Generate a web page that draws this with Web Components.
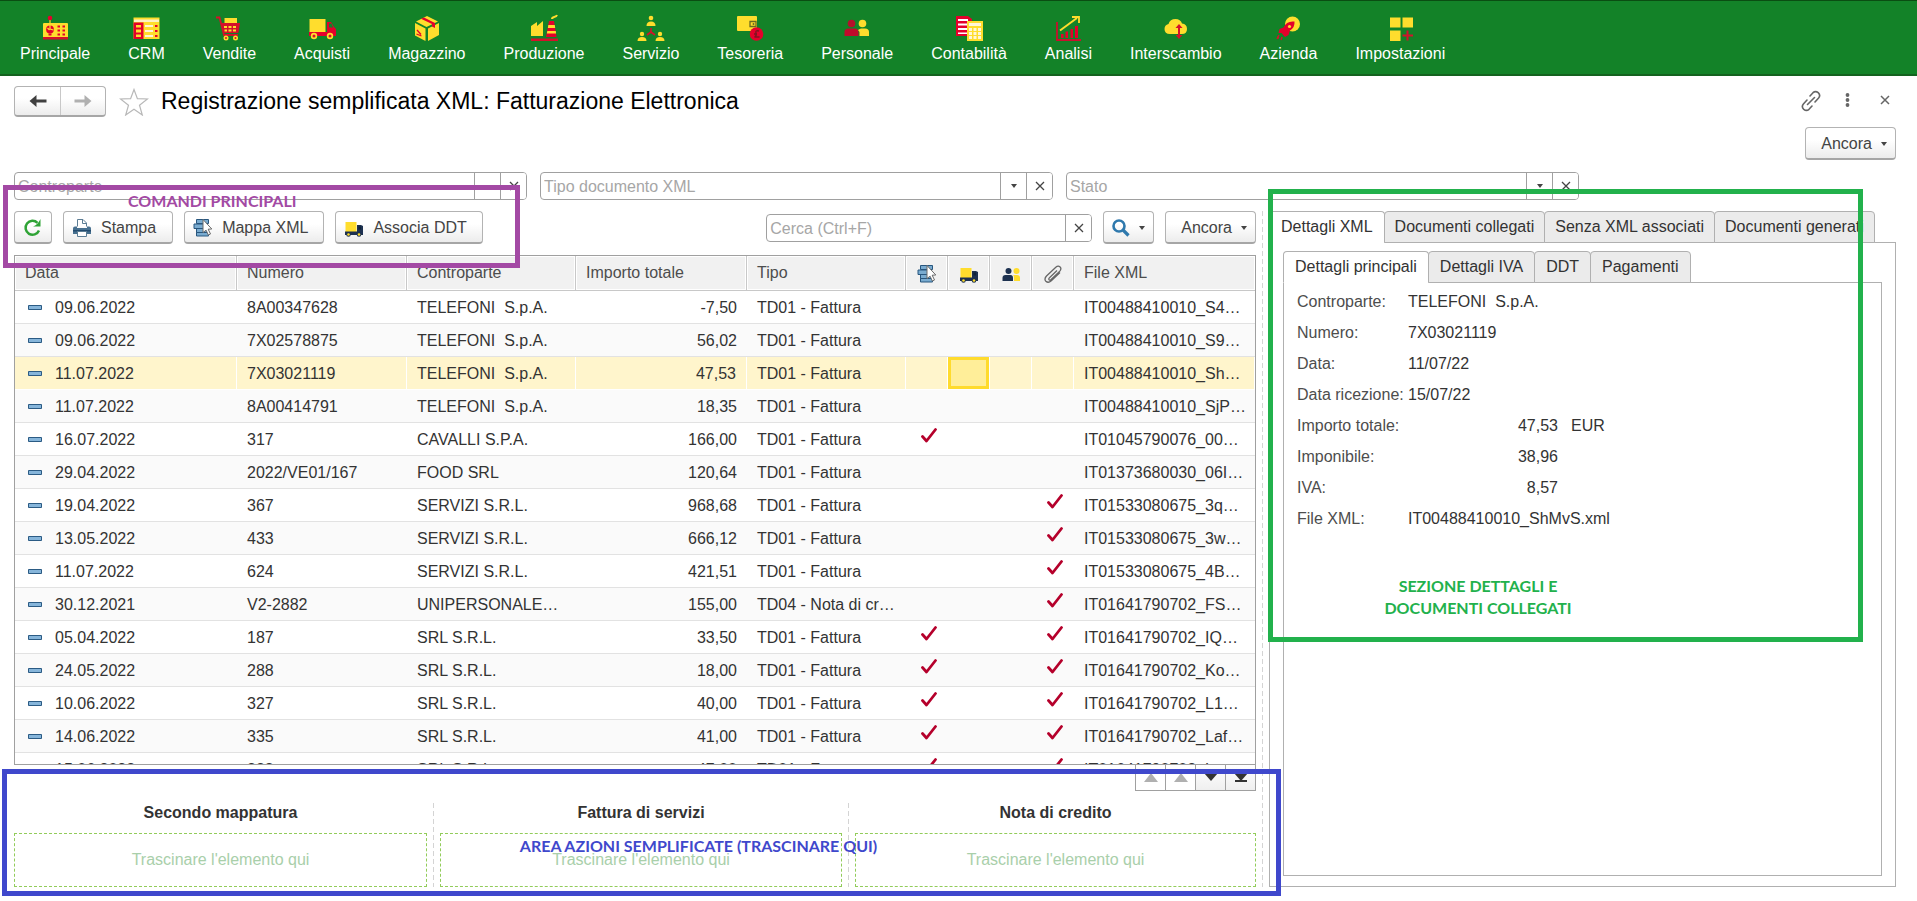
<!DOCTYPE html>
<html lang="it">
<head>
<meta charset="utf-8">
<title>Registrazione semplificata XML: Fatturazione Elettronica</title>
<style>
html,body{margin:0;height:100%}
body{font:16px/24px "Liberation Sans",Arial,sans-serif;color:#333;background:#fff;overflow:hidden}
</style>
</head>
<body>
<erp-app></erp-app>
<script>
const ICONS={
principale:[28,28,`<path d="M9 5v5" stroke="#f3c623" stroke-width="1.4"/><circle cx="9" cy="5" r="2.3" fill="#e4002b"/><path d="M2 11q0-1 1-1h23q1 0 1 1v13H2z" fill="#ffdd2d"/><path d="M2 24h25v2.5H2z" fill="#d5102b"/><circle cx="9" cy="16.500" r="3.900" fill="#e4002b"/><path d="M9 11v5l3.500 1M6.500 15l2 2" stroke="#ffdd2d" stroke-width="1.200" fill="none"/><path d="M7.500 20.500h3v2h-3zM16.500 12.500h2.500v2h-2.500zM21.500 12.500H24v2h-2.500zM16.500 16.500h2.500v2h-2.500zM21.500 16.500H24v2h-2.500zM16.500 20.500h2.500v2h-2.500zM21.500 20.500H24v2h-2.500z" fill="#e4002b"/>`],
crm:[28,28,`<path d="M1.500 4.500h26V26h-26z" fill="#ffdd2d"/><path d="M2 6.500h25v2.500H2z" fill="#fff3c4"/><path d="M1.500 9.500h10V26h-10z" fill="#e4002b"/><path d="M4 12h5v2.500H4zM4 16.500h5v3H4zM4 21.500h5V24H4z" fill="#ffdd2d"/><path d="M13 12h8v2h-8zM13 17h8v2h-8zM13 22h8v2h-8z" fill="#fff6d8"/><path d="M23 12h2.500v2H23zM23 17h2.500v2H23zM23 22h2.500v2H23z" fill="#e4002b"/>`],
vendite:[28,28,`<path d="M9.500 5h12.500v7H9.500z" fill="#ffdd2d"/><path d="M1 4.500h3.500l4.500 17.500h14M5.500 11H24l-1.500 8H8" fill="none" stroke="#d5102b" stroke-width="1.800"/><path d="M7 12h16.500v7H8z" fill="#d5102b"/><path d="M9 13h3v2H9zM13.500 13h3v2h-3zM18 13h3v2h-3zM9.500 16.500h2.500v2H9.500zM13.500 16.500h3v2h-3zM18 16.500h3v2h-3z" fill="#ffdd2d"/><circle cx="11" cy="25" r="2.500" fill="#ffdd2d"/><circle cx="20.500" cy="25" r="2.500" fill="#ffdd2d"/><circle cx="11" cy="25" r="1" fill="#d5102b"/><circle cx="20.500" cy="25" r="1" fill="#d5102b"/>`],
acquisti:[28,28,`<path d="M1.500 6h16v13h-16z" fill="#ffdd2d"/><path d="M19 9h4l3 5 2 2v7H1v-4h18z" fill="#e4002b"/><path d="M21 10.500h2.500l1.500 4h-4z" fill="#138228"/><circle cx="6" cy="23" r="3.200" fill="#ffdd2d"/><circle cx="22" cy="23" r="3.200" fill="#ffdd2d"/><circle cx="6" cy="23" r="1.500" fill="#d5102b"/><circle cx="22" cy="23" r="1.500" fill="#d5102b"/>`],
magazzino:[28,28,`<path d="M14 3l11 5.500L13.500 14 3 8.500z" fill="#ffdd2d"/><path d="M2 10l10.500 5.500V28L2 22.500z" fill="#ffdd2d"/><path d="M15 15.500L26 10v12l-11 6z" fill="#ffdd2d"/><path d="M11 4.500l11 5.500v5l-3-1.500v-2.500L8 5.800z" fill="#e4002b"/><path d="M4 17l4 4.500M3.500 21l5 2" stroke="#e4002b" stroke-width="1.300"/>`],
produzione:[28,28,`<path d="M1 23V13l6-4v4l6-5v15z" fill="#ffdd2d"/><path d="M19 8h5l2.500 16H16z" fill="#e4002b"/><path d="M18.300 12h6.500l.4 3h-7.300zM17.300 18h8.500l.3 2.500h-9.200z" fill="#ffdd2d"/><path d="M1 25.500h27V28H1z" fill="#d5102b"/><path d="M22 6c0-3 4-1 5-4" stroke="#ffdd2d" stroke-width="2" fill="none"/>`],
servizio:[28,28,`<g fill="#ffdd2d"><circle cx="14" cy="5" r="2.300"/><path d="M9.500 13q0-4.500 4.500-4.500t4.500 4.500z"/><circle cx="5" cy="21" r="2.200"/><path d="M.5 28q0-4 4.500-4t4.500 4z"/><circle cx="23" cy="21" r="2.200"/><path d="M18.500 28q0-4 4.500-4t4.500 4z"/></g><path d="M14 15v4l-4 3M14 19l4 3" stroke="#d5102b" stroke-width="1.600" fill="none"/>`],
tesoreria:[28,28,`<rect x="1" y="3" width="20" height="15" rx="1" fill="#ffdd2d"/><path d="M14 8.500h6v5h-6z" fill="none" stroke="#6b6a20" stroke-width="1.300"/><circle cx="17.500" cy="11" r="1" fill="#6b6a20"/><circle cx="20.500" cy="21" r="6.800" fill="#e4002b"/><path d="M23 18q-4-1-3 2t-1.500 4h5M18 21h3" stroke="#7f1420" stroke-width="1.300" fill="none"/>`],
personale:[28,28,`<circle cx="8.500" cy="10.500" r="3.800" fill="#b5102b"/><path d="M1.500 23v-4q0-3.500 4-3.500h6q4 0 4 3.500v4z" fill="#c00a2b"/><circle cx="19.500" cy="10.500" r="3.800" fill="#ffdd2d"/><path d="M15 17q2-1.500 3-1.500h4q4 0 4 3.500v4H16.500v-4z" fill="#ffdd2d"/>`],
contabilita:[28,28,`<path d="M1 3h12l4 3v17H1z" fill="#e4002b"/><path d="M3 6h10v2H3zM3 10.500h10v2H3zM3 15h10v2H3zM3 19.500h10v1.500H3z" fill="#fff"/><path d="M12 8h16v20H12z" fill="#ffdd2d"/><path d="M14 10h12v3H14zM14 15h3v3h-3zM18.500 15h3v3h-3zM23 15h3v3h-3zM14 19h3v3h-3zM18.500 19h3v3h-3zM23 19h3v3h-3zM14 23h3v3h-3zM18.500 23h3v3h-3zM23 23h3v3h-3z" fill="#fff6d8"/>`],
analisi:[28,28,`<path d="M3 9v18h24" stroke="#c8102e" stroke-width="1.800" fill="none"/><path d="M7 21h2.500v4H7zM11.500 18.500H14V25h-2.500zM16.500 16H19v9h-2.500zM21 13h3v12h-3z" fill="#e4002b"/><path d="M6 17.500L23 5" stroke="#ffdd2d" stroke-width="2"/><path d="M18 4h7v6" stroke="#ffdd2d" stroke-width="1.800" fill="none"/>`],
interscambio:[28,28,`<path d="M8 21q-5.500 0-5.500-5 0-4 4-5Q8 6 13.500 6q5 0 6.500 4.500 5 .5 5 5.500t-5 5z" fill="#ffdd2d"/><path d="M17 13v11" stroke="#d5102b" stroke-width="2"/><path d="M17 11l3.500 4h-7zM17 26l3.500-4h-7z" fill="#d5102b"/>`],
azienda:[28,28,`<circle cx="18.500" cy="11" r="7.500" fill="#ffdd2d"/><path d="M20.500 8.500q-8-1-11 6l-4 1.500-1 4 3 0 3.500 4 3.500-2 1.500-4.500q5-3 4.500-9z" fill="#e4002b"/><circle cx="15.500" cy="13.500" r="1.600" fill="#ffdd2d"/><path d="M5 22l-2 4M8 24l-1 3M5 25l-2-1" stroke="#d5102b" stroke-width="1.400"/>`],
impostazioni:[28,28,`<path d="M4 4.500h10.500v10H4zM16.500 4.500H27v10H16.500zM4 17.500h10.500V28H4z" fill="#ffdd2d"/><path d="M21.500 17.500v10M16.500 22.500h10.500" stroke="#d5102b" stroke-width="2"/>`],
back:[20,16,`<path d="M1.500 8L8.500 2v4.600h10v2.800h-10V14z" fill="#404040"/>`],
fwd:[20,16,`<path d="M18.500 8l-7-6v4.600h-10v2.800h10V14z" fill="#b0b0b0"/>`],
star:[30,28,`<path d="M15 1.500l3.400 9.200 10.100.3-8 6.200 2.800 9.800L15 21.300 6.700 27l2.800-9.800-8-6.200 10.100-.3z" fill="#fff" stroke="#b8b8b8" stroke-width="1.200"/>`],
link:[22,22,`<g fill="none" stroke="#666" stroke-width="1.600" stroke-linecap="round"><path d="M10 6l3-3.300q2.500-2.200 5.200 0 2.700 2.600.4 5.300L15 12"/><path d="M12 16l-3 3.300q-2.500 2.200-5.200 0-2.700-2.600-.4-5.300L7 10"/><path d="M7.500 14.500l7-7"/></g>`],
dots:[22,22,`<g fill="#666"><circle cx="10.500" cy="5" r="1.900"/><circle cx="10.500" cy="10" r="1.900"/><circle cx="10.500" cy="15" r="1.900"/></g>`],
close:[22,22,`<path d="M7 6l8 8M15 6l-8 8" stroke="#666" stroke-width="1.500"/>`],
x:[10,10,`<path d="M1 1l8 8M9 1L1 9" stroke="#444" stroke-width="1.300"/>`],
caret:[6,4,`<path d="M0 0h6L3 4z" fill="#444"/>`],
refresh:[20,20,`<path d="M16 12.500A7 7 0 1 1 14.500 4.800" fill="none" stroke="#2fa336" stroke-width="2.500"/><path d="M17.500 1v7.500H10q4.500-1.500 7.500-7.500z" fill="#2fa336"/>`],
printer:[20,20,`<path d="M5.500 8.500V1.500h5.500l3.500 3.500v3.500" fill="#fff" stroke="#5c7d94"/><path d="M10.500 1.500V5.500h4" fill="none" stroke="#5c7d94"/><path d="M1 10.500q0-2 2-2h2v1.500h10V8.500h2q2 0 2 2V16H1z" fill="#47708f"/><path d="M1 12h18v1.500H1z" fill="#234b6e"/><path d="M5.500 13.500h9v5h-9z" fill="#fff" stroke="#5c7d94"/>`],
map:[20,20,`<g fill="#79abd0" stroke="#28567e"><path d="M3.500 1.500h12v4h-12zM3.500 10.500h12v4h-12zM3.500 14.500h12v3.500h-12z"/><path d="M1 6h12v4.500H1z"/></g><path d="M10 1.500l8.800 9.500-3.600.2 2.300 4.800-2.200 1-2.200-4.800L10 14.500z" fill="#fff" stroke="#6b6b6b"/>`],
truck:[20,20,`<path d="M1.500 4h11v10h-11z" fill="#ffdd2d"/><path d="M13 7h4l2 1v9H1v-3.500h12z" fill="#1d3150"/><path d="M14.500 8.500H17v3h-2.500z" fill="#0f2238"/><circle cx="4.500" cy="16.500" r="2.300" fill="#1d3150"/><circle cx="15" cy="16.500" r="2.300" fill="#1d3150"/><circle cx="4.500" cy="16.500" r="1.300" fill="#ffdd2d"/><circle cx="15" cy="16.500" r="1.300" fill="#ffdd2d"/>`],
people:[20,20,`<circle cx="7.500" cy="7" r="3" fill="#1d3150"/><path d="M1.500 17v-3q0-3 3-3h5q2.500 0 2.500 3v3z" fill="#1d3150"/><circle cx="15.500" cy="7" r="3" fill="#ffdd2d"/><path d="M13 17v-3q0-2-.8-3H16q3 0 3 3v3z" fill="#ffdd2d"/>`],
clip:[20,20,`<path d="M14 6.500l-7.500 7.300q-1.200 1-.4 1.900.9.800 2-.2l8.700-8.400q2-2.300.3-4.200-2-1.700-4.300.3L3.500 12q-2.700 3-.6 5.300 2.400 2.200 5.400-.5L17 8.500" fill="none" stroke="#666" stroke-width="1.300"/>`],
search:[18,20,`<circle cx="7" cy="8" r="5.500" fill="none" stroke="#2f79ad" stroke-width="2.600"/><path d="M11 12l5.500 5.500" stroke="#2f79ad" stroke-width="3.200"/>`],
minus:[15,5,`<path d="M.5.5h13v4H.5z" fill="#86b5da" stroke="#2b5b84"/>`],
check:[16,15,`<path d="M1.500 8.500l4 4.500L14.500 1.500" fill="none" stroke="#b5002b" stroke-width="2.800" stroke-linecap="round" stroke-linejoin="round"/>`],
top:[16,12,`<path d="M1 0h14v2H1zM8 1l7 9H1z" fill="#b0b0b0"/>`],
up:[16,12,`<path d="M8 1l7 9H1z" fill="#b0b0b0"/>`],
down:[16,12,`<path d="M1 1h14l-7 8z" fill="#333"/>`],
bottom:[16,12,`<path d="M1 1h14l-7 8zM2 8h12v2H2z" fill="#333"/>`]
};
const define=(name,render,after)=>customElements.define(name,class extends HTMLElement{
  connectedCallback(){
    if(this.shadowRoot)return;
    const root=this.attachShadow({mode:'open'});
    root.innerHTML='<style>*{box-sizing:border-box}:host{box-sizing:border-box}</style>'+render(this);
    if(after)after(this,root);
  }
});
const attr=(el,n,d='')=>el.getAttribute(n)??d;

define('ui-icon',el=>{
  const [w,h,body]=ICONS[attr(el,'name')];
  return `<style>:host{display:inline-flex;flex:none}svg{display:block}</style><svg width="${w}" height="${h}" viewBox="0 0 ${w} ${h}" aria-hidden="true">${body}</svg>`;
});

define('nav-item',el=>`<style>:host{display:block}
a{display:flex;flex-direction:column;align-items:center;padding:13px 19px 0;color:#fff;text-decoration:none;line-height:26px}</style>
<a href="#"><ui-icon name="${attr(el,'icon')}"></ui-icon><span><slot></slot></span></a>`);

define('app-nav',()=>`<style>:host{display:block}
nav{display:flex;height:76px;padding-left:1px;background:#138228;border-bottom:2px solid #14621f;box-shadow:inset 0 1px #0a4d12}</style>
<nav>${[['principale','Principale'],['crm','CRM'],['vendite','Vendite'],['acquisti','Acquisti'],['magazzino','Magazzino'],['produzione','Produzione'],['servizio','Servizio'],['tesoreria','Tesoreria'],['personale','Personale'],['contabilita','Contabilità'],['analisi','Analisi'],['interscambio','Interscambio'],['azienda','Azienda'],['impostazioni','Impostazioni']].map(([i,t])=>`<nav-item icon="${i}">${t}</nav-item>`).join('')}</nav>`);

define('tool-button',el=>`<style>:host{display:block;flex:none}
button{display:flex;align-items:center;justify-content:center;width:100%;height:33px;margin:0;padding:1px 8px 0;gap:9px;font:inherit;color:#444;background:linear-gradient(#fff 40%,#ececec);border:1px solid #b3b3b3;border-bottom:2px solid #a6a6a6;border-radius:4px}</style>
<button aria-label="${attr(el,'label')}">${el.hasAttribute('icon')?`<ui-icon name="${attr(el,'icon')}"></ui-icon>`:''}<slot></slot>${el.hasAttribute('menu')?'<ui-icon name="caret"></ui-icon>':''}</button>`,
(el,root)=>{if(!attr(el,'label'))root.querySelector('button').removeAttribute('aria-label')});

define('combo-field',el=>`<style>:host{display:block;min-width:0}
div{display:flex;height:28px;border:1px solid #a0a0a0;border-radius:4px;background:#fff;overflow:hidden}
input{flex:1;min-width:0;border:0;outline:0;padding:1px 3px 0;font:inherit;color:#333;background:none}
input::placeholder{color:#a6a6a6;opacity:1}
button{display:flex;align-items:center;justify-content:center;width:26px;padding:0;border:0;border-left:1px solid #a0a0a0;background:#fff}</style>
<div><input type="text" aria-label="${attr(el,'label')}" placeholder="${attr(el,'label')}">${el.hasAttribute('plain')?'':`<button aria-label="Scegli">${el.hasAttribute('nocaret')?'':'<ui-icon name="caret"></ui-icon>'}</button>`}<button aria-label="Cancella"><ui-icon name="x"></ui-icon></button></div>`);

define('note-frame',()=>`<style>:host{position:absolute;z-index:5;pointer-events:none;border:5px solid currentColor;font:bold 16px/22px Lato,"Open Sans",sans-serif;text-align:center}</style><slot></slot>`);

const R=[
['09.06.2022','8A00347628','TELEFONI&nbsp; S.p.A.','-7,50',0,0,'IT00488410010_S4…'],
['09.06.2022','7X02578875','TELEFONI&nbsp; S.p.A.','56,02',0,0,'IT00488410010_S9…'],
['11.07.2022','7X03021119','TELEFONI&nbsp; S.p.A.','47,53',0,0,'IT00488410010_Sh…'],
['11.07.2022','8A00414791','TELEFONI&nbsp; S.p.A.','18,35',0,0,'IT00488410010_SjP…'],
['16.07.2022','317','CAVALLI S.P.A.','166,00',1,0,'IT01045790076_00…'],
['29.04.2022','2022/VE01/167','FOOD SRL','120,64',0,0,'IT01373680030_06I…'],
['19.04.2022','367','SERVIZI S.R.L.','968,68',0,1,'IT01533080675_3q…'],
['13.05.2022','433','SERVIZI S.R.L.','666,12',0,1,'IT01533080675_3w…'],
['11.07.2022','624','SERVIZI S.R.L.','421,51',0,1,'IT01533080675_4B…'],
['30.12.2021','V2-2882','UNIPERSONALE…','155,00',0,1,'IT01641790702_FS…','TD04 - Nota di cr…'],
['05.04.2022','187','SRL S.R.L.','33,50',1,1,'IT01641790702_IQ…'],
['24.05.2022','288','SRL S.R.L.','18,00',1,1,'IT01641790702_Ko…'],
['10.06.2022','327','SRL S.R.L.','40,00',1,1,'IT01641790702_L1…'],
['14.06.2022','335','SRL S.R.L.','41,00',1,1,'IT01641790702_Laf…'],
['15.06.2022','338','SRL S.R.L.','47,00',1,1,'IT01641790702_L…']];
const ck=v=>v?'<ui-icon name="check"></ui-icon>':'';
define('invoice-grid',()=>`<style>:host{display:block;flex:1 1 0;min-height:0;overflow:hidden;border:1px solid #a0a0a0}
table{width:100%;border-collapse:separate;border-spacing:0;table-layout:fixed;white-space:nowrap}
th,td{padding:0 10px;text-align:left;font-weight:normal;overflow:hidden}
th{height:35px;background:#f1f1f1;color:#4d4d4d;border-right:1px solid #c8c8c8;border-bottom:1px solid #c8c8c8;box-shadow:inset 1px 1px #fff,inset -1px -1px #fff}
th:last-child,td:last-child{border-right:0}
th ui-icon{vertical-align:middle}
th.i{padding:0;text-align:center}
td{height:33px;padding:2px 10px 0;border-bottom:1px solid #e2e2e2;line-height:30px}
tr:nth-child(even) td{background:#fafafa}
tr.sel td{background:#fff5cc;border-bottom-color:#fff;border-right:1px solid #fff}
tr.sel td.cur{background:#ffee99;box-shadow:inset 0 0 0 3px #ffdb2d}
td.n{text-align:right}
td.d{padding-left:13px}
td.d ui-icon{margin:0 12px 3px 0;vertical-align:middle}
td.c{padding:5px 0 0 15px;line-height:0;vertical-align:top}</style>
<table><colgroup><col style="width:222px"><col style="width:170px"><col style="width:169px"><col style="width:171px"><col style="width:159px"><col style="width:42px"><col style="width:42px"><col style="width:42px"><col style="width:42px"><col></colgroup>
<thead><tr><th>Data</th><th>Numero</th><th>Controparte</th><th>Importo totale</th><th>Tipo</th><th class="i" aria-label="Mappa"><ui-icon name="map"></ui-icon></th><th class="i" aria-label="DDT"><ui-icon name="truck"></ui-icon></th><th class="i" aria-label="Anagrafica"><ui-icon name="people"></ui-icon></th><th class="i" aria-label="Allegati"><ui-icon name="clip"></ui-icon></th><th>File XML</th></tr></thead>
<tbody>${R.map((r,i)=>`<tr class="${i===2?'sel':''}"><td class="d"><ui-icon name="minus"></ui-icon>${r[0]}</td><td>${r[1]}</td><td>${r[2]}</td><td class="n">${r[3]}</td><td>${r[7]||'TD01 - Fattura'}</td><td class="c">${ck(r[4])}</td><td class="${i===2?'cur':''}"></td><td></td><td class="c">${ck(r[5])}</td><td>${r[6]}</td></tr>`).join('')}</tbody></table>`);

define('grid-pager',()=>`<style>:host{display:flex;justify-content:flex-end}
div{display:flex;border:1px solid #a0a0a0;border-top:0}
button{display:flex;align-items:center;justify-content:center;width:30px;height:25px;padding:0;border:0;border-right:1px solid #a0a0a0;background:linear-gradient(#fff,#efefef)}
button:disabled{background:#fff}
button:last-child{border-right:0;width:29px}</style>
<div><button disabled aria-label="Inizio"><ui-icon name="top"></ui-icon></button><button disabled aria-label="Su"><ui-icon name="up"></ui-icon></button><button aria-label="Giù"><ui-icon name="down"></ui-icon></button><button aria-label="Fine"><ui-icon name="bottom"></ui-icon></button></div>`);

define('drop-zone',el=>`<style>:host{display:flex;flex-direction:column;min-width:0;text-align:center}
h2{margin:0;height:30px;font:bold 16px/20px "Liberation Sans",Arial,sans-serif;color:#333}
div{height:54px;line-height:52px;border:1px dashed #92cc5a;color:#a9cfaa}</style>
<h2>${attr(el,'heading')}</h2><div><slot></slot></div>`);

define('tab-set',el=>`<style>:host{display:flex;flex-direction:column;flex:1;min-width:0;min-height:0}
.tabs{display:flex;position:relative;z-index:1;margin-bottom:-1px}
button{height:32px;margin:0 0 0 -1px;padding:0 ${attr(el,'tabpad','11')}px;font:inherit;color:#333;background:#ebebeb;border:1px solid #b0b0b0;border-radius:4px 4px 0 0;white-space:nowrap}
button:first-child{margin-left:0;padding:0 11px;background:#fff;border-bottom-color:#fff}
.panel{flex:1;min-height:0;display:flex;flex-direction:column;border:1px solid #b0b0b0;padding:${attr(el,'pad')}}</style>
<div class="tabs" role="tablist">${attr(el,'tabs').split('|').map((t,i)=>`<button role="tab" aria-selected="${!i}">${t}</button>`).join('')}</div><div class="panel" role="tabpanel"><slot></slot></div>`);

define('invoice-details',()=>`<style>:host{display:block}
dl{display:grid;grid-template-columns:111px 1fr;grid-auto-rows:31px;margin:0;line-height:31px}
dt{color:#4d4d4d;white-space:nowrap}dd{margin:0}
.n{display:flex;gap:13px}.n b{width:150px;font-weight:normal;text-align:right}</style>
<dl><dt>Controparte:</dt><dd>TELEFONI&nbsp; S.p.A.</dd><dt>Numero:</dt><dd>7X03021119</dd><dt>Data:</dt><dd>11/07/22</dd><dt>Data ricezione:</dt><dd>15/07/22</dd><dt>Importo totale:</dt><dd class="n"><b>47,53</b>EUR</dd><dt>Imponibile:</dt><dd class="n"><b>38,96</b></dd><dt>IVA:</dt><dd class="n"><b>8,57</b></dd><dt>File XML:</dt><dd>IT00488410010_ShMvS.xml</dd></dl>`);

define('page-header',()=>`<style>:host{display:flex;align-items:center;height:31px}
.hist{display:flex;height:31px;border:1px solid #b3b3b3;border-bottom:2px solid #a6a6a6;border-radius:4px;background:linear-gradient(#fff 40%,#ececec)}
button{display:flex;align-items:center;justify-content:center;padding:0;border:0;background:none}
.hist button{width:45px}.hist button+button{width:45px;border-left:1px solid #c8c8c8}
.star{margin:0 12px 0 13px}
h1{margin:0;flex:1;font:23px/28px "Liberation Sans",Arial,sans-serif;height:30px;color:#000}
.act{display:flex;gap:15px}
.act button{align-items:flex-start;height:24px}</style>
<div class="hist"><button aria-label="Indietro"><ui-icon name="back"></ui-icon></button><button aria-label="Avanti"><ui-icon name="fwd"></ui-icon></button></div>
<button class="star" aria-label="Preferiti"><ui-icon name="star"></ui-icon></button>
<h1>Registrazione semplificata XML: Fatturazione Elettronica</h1>
<div class="act"><button aria-label="Collegamento"><ui-icon name="link"></ui-icon></button><button aria-label="Altro"><ui-icon name="dots"></ui-icon></button><button aria-label="Chiudi"><ui-icon name="close"></ui-icon></button></div>`);

define('command-bar',()=>`<style>:host{display:flex;position:relative;margin-bottom:11px}
.left{display:flex;gap:11px;flex:1}
.left span{margin-right:8px}
.left span.s{margin-right:7px}
.right{display:flex;align-items:flex-start;gap:11px}
.right span{margin-left:7px}
combo-field{width:326px;margin-top:3px}
.purple{color:#a349a4;left:-11px;top:-26px;width:517px;height:83px}
.purple span{position:absolute;left:120px;top:0;white-space:nowrap}</style>
<div class="left"><tool-button icon="refresh" label="Aggiorna"></tool-button><tool-button icon="printer"><span>Stampa</span></tool-button><tool-button icon="map"><span class="s">Mappa XML</span></tool-button><tool-button icon="truck"><span class="s">Associa DDT</span></tool-button></div>
<div class="right"><combo-field plain label="Cerca (Ctrl+F)"></combo-field><tool-button icon="search" menu label="Cerca"></tool-button><tool-button menu><span>Ancora</span></tool-button></div>
<note-frame class="purple"><span>COMANDI PRINCIPALI</span></note-frame>`);

define('drop-area',()=>`<style>:host{display:grid;position:relative;grid-template-columns:minmax(0,413fr) 13px minmax(0,402fr) 13px minmax(0,401fr);margin-top:12px}
i{justify-self:center;width:1px;background:repeating-linear-gradient(#d4d4d4 0 5px,transparent 5px 8px)}
.blue{color:#3f48cc;left:-12px;top:-34px;right:-25px;bottom:-9px}
.blue span{position:absolute;left:114px;right:0;top:61px}</style>
<drop-zone heading="Secondo mappatura">Trascinare l'elemento qui</drop-zone><i></i><drop-zone heading="Fattura di servizi">Trascinare l'elemento qui</drop-zone><i></i><drop-zone heading="Nota di credito">Trascinare l'elemento qui</drop-zone>
<note-frame class="blue"><span>AREA AZIONI SEMPLIFICATE (TRASCINARE QUI)</span></note-frame>`);

define('erp-app',()=>`<style>:host{display:flex;flex-direction:column;height:100vh}
.page{flex:1;min-height:0;display:flex;flex-direction:column;padding:10px 21px 14px 14px}
.more{display:flex;justify-content:flex-end;margin:10px 0 12px}
.more span{margin-left:7px}
.filters{display:grid;grid-template-columns:repeat(3,minmax(0,513fr)) minmax(0,304fr);gap:13px;margin-bottom:11px}
.main{flex:1;min-height:0;display:grid;grid-template-columns:minmax(0,1242fr) 13px minmax(0,627fr)}
.left{display:flex;flex-direction:column;min-height:0}
.split{justify-self:center;width:1px;background:repeating-linear-gradient(#d4d4d4 0 5px,transparent 5px 8px)}
.right{display:flex;position:relative;min-height:0}
.green{color:#22b14c;left:-1px;top:-22px;right:33px;height:453px}
.green span{position:absolute;left:0;right:175px;top:381px}
invoice-details{padding:3px 13px}</style>
<app-nav></app-nav>
<div class="page"><page-header></page-header>
<div class="more"><tool-button menu><span>Ancora</span></tool-button></div>
<div class="filters"><combo-field nocaret label="Controparte"></combo-field><combo-field label="Tipo documento XML"></combo-field><combo-field label="Stato"></combo-field></div>
<div class="main"><div class="left"><command-bar></command-bar><invoice-grid></invoice-grid><grid-pager></grid-pager><drop-area></drop-area></div><div class="split"></div>
<div class="right"><tab-set pad="8px 13px 10px" tabpad="10" tabs="Dettagli XML|Documenti collegati|Senza XML associati|Documenti generati"><tab-set pad="0" tabs="Dettagli principali|Dettagli IVA|DDT|Pagamenti"><invoice-details></invoice-details></tab-set></tab-set>
<note-frame class="green"><span>SEZIONE DETTAGLI E<br>DOCUMENTI COLLEGATI</span></note-frame></div></div></div>`);
</script>
</body>
</html>
